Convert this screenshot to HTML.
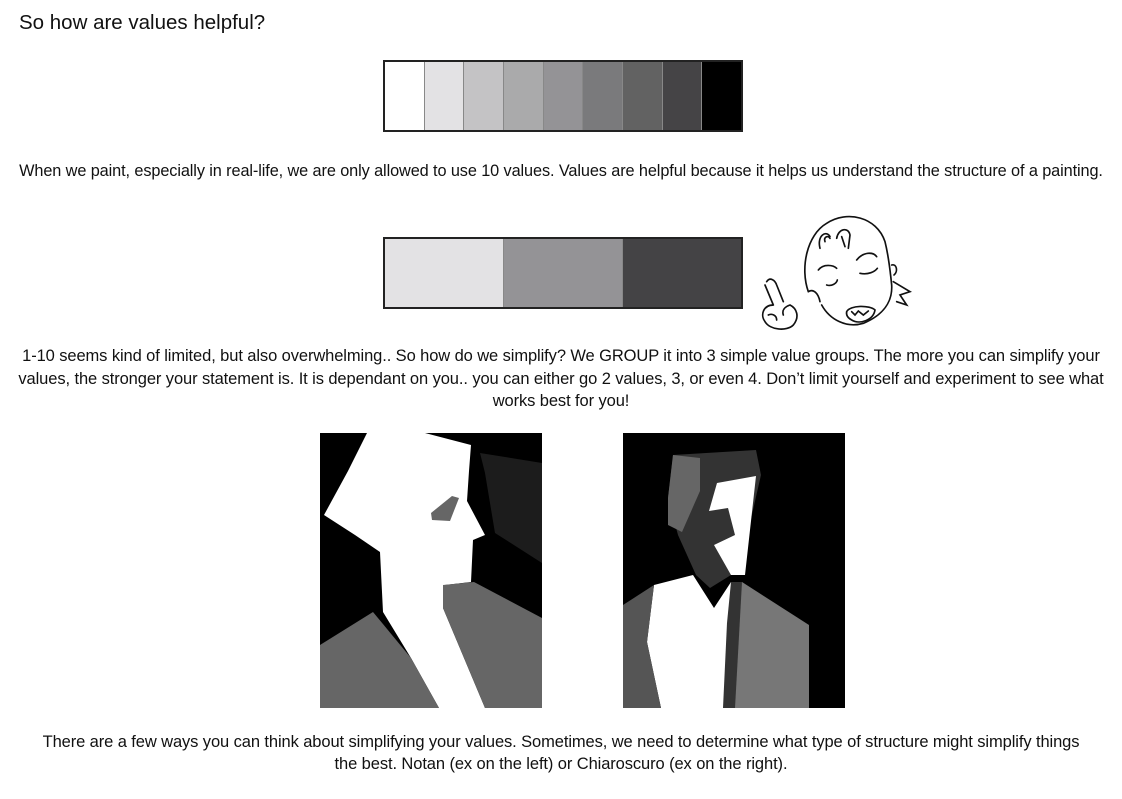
<!DOCTYPE html>
<html><head><meta charset="utf-8"><style>
html,body{margin:0;padding:0;background:#fff;}
body{width:1122px;height:799px;position:relative;overflow:hidden;font-family:"Liberation Sans",sans-serif;color:#111;}
.t{position:absolute;white-space:nowrap;font-size:16.5px;letter-spacing:-0.1px;}
.c{left:0;width:1122px;text-align:center;}
.bar{position:absolute;left:383px;width:356px;height:68px;border:2px solid #222;display:flex;}
.bar div{flex:1;border-right:1px solid #888;}
.bar div:last-child{border-right:none;}
</style></head><body>
<div class="t" style="left:19px;top:11px;font-size:20.5px;letter-spacing:0">So how are values helpful?</div>
<div class="bar" style="top:60px">
<div style="background:#fff"></div><div style="background:#e3e2e4"></div><div style="background:#c4c3c5"></div><div style="background:#aaaaab"></div><div style="background:#949396"></div><div style="background:#7a7a7c"></div><div style="background:#626262"></div><div style="background:#454446"></div><div style="background:#000"></div>
</div>
<div class="t c" style="top:162px;font-size:16.3px">When we paint, especially in real-life, we are only allowed to use 10 values. Values are helpful because it helps us understand the structure of a painting.</div>
<div class="bar" style="top:237px">
<div style="background:#e3e2e4"></div><div style="background:#949396"></div><div style="background:#444345"></div>
</div>
<svg style="position:absolute;left:750px;top:205px" width="170" height="140" viewBox="0 0 510 420" fill="none" stroke="#111" stroke-width="5" stroke-linecap="round">
<path d="M175,260 C150,190 170,90 230,55 C290,15 380,35 405,110 C415,150 420,190 425,240 C428,290 400,330 340,355 C290,370 240,345 215,300"/>
<path d="M175,260 C190,250 205,265 210,290"/>
<path d="M425,180 C440,175 445,200 432,210"/>
<path d="M430,230 L480,260 L450,270 L470,300 L440,290"/>
<path d="M210,130 C200,90 230,75 240,95 M225,110 C220,95 235,90 240,100"/>
<path d="M260,100 C265,70 295,65 300,90 L295,130 M275,95 L285,125"/>
<path d="M205,195 C220,175 250,180 260,190 M230,240 C245,245 260,235 262,225"/>
<path d="M320,165 C340,140 370,140 380,155 M330,205 C355,210 375,200 382,190"/>
<path d="M290,320 C300,300 360,300 375,315 C370,345 330,360 305,345 C292,338 288,330 290,320 Z"/>
<path d="M305,320 L315,330 L325,318 L340,330 L355,318"/>
<path d="M50,230 C60,215 75,225 80,240 L100,290 M45,240 L70,300 M70,300 C40,300 30,330 45,350 C60,375 110,380 130,360 C150,335 140,310 120,300 C105,305 95,315 100,330 M55,330 C65,325 80,330 80,345"/>
</svg>
<div class="t c" style="top:347px">1-10 seems kind of limited, but also overwhelming.. So how do we simplify? We GROUP it into 3 simple value groups. The more you can simplify your</div>
<div class="t c" style="top:370px">values, the stronger your statement is. It is dependant on you.. you can either go 2 values, 3, or even 4. Don’t limit yourself and experiment to see what</div>
<div class="t c" style="top:392px">works best for you!</div>
<svg style="position:absolute;left:320px;top:433px" width="222" height="275" viewBox="0 0 222 275">
<rect width="222" height="275" fill="#000"/>
<polygon fill="#fff" points="47,0 105,0 151,12 149,38 147,68 165,102 153,107 151,149 125,152 123,175 165,275 119,275 91,225 63,179 60,119 35,102 4,82 28,38"/>
<polygon fill="#666" points="0,212 53,179 91,225 119,275 0,275"/>
<polygon fill="#666" points="123,152 154,149 222,185 222,275 165,275 123,175"/>
<polygon fill="#666" points="111,80 132,63 139,65 130,88 112,87"/>
<polygon fill="#1c1c1c" points="160,20 222,30 222,130 175,100 165,40"/>
</svg>
<svg style="position:absolute;left:623px;top:433px" width="222" height="275" viewBox="0 0 222 275">
<rect width="222" height="275" fill="#000"/>
<polygon fill="#333" points="50,22 133,17 138,42 119,125 108,142 87,155 73,142 55,102 45,65"/>
<polygon fill="#666" points="50,22 77,25 77,58 59,99 45,92 45,65"/>
<polygon fill="#fff" points="94,50 133,43 122,142 108,142 91,112 112,102 105,75 86,78"/>
<polygon fill="#fff" points="31,152 70,142 91,175 108,149 119,149 115,275 38,275 24,209"/>
<polygon fill="#555" points="0,172 31,152 24,209 38,275 0,275"/>
<polygon fill="#777" points="119,149 186,192 186,275 105,275 108,185"/>
<polygon fill="#333" points="108,149 119,149 112,275 100,275 104,190"/>
</svg>
<div class="t c" style="top:733px">There are a few ways you can think about simplifying your values. Sometimes, we need to determine what type of structure might simplify things</div>
<div class="t c" style="top:755px">the best. Notan (ex on the left) or Chiaroscuro (ex on the right).</div>
</body></html>
